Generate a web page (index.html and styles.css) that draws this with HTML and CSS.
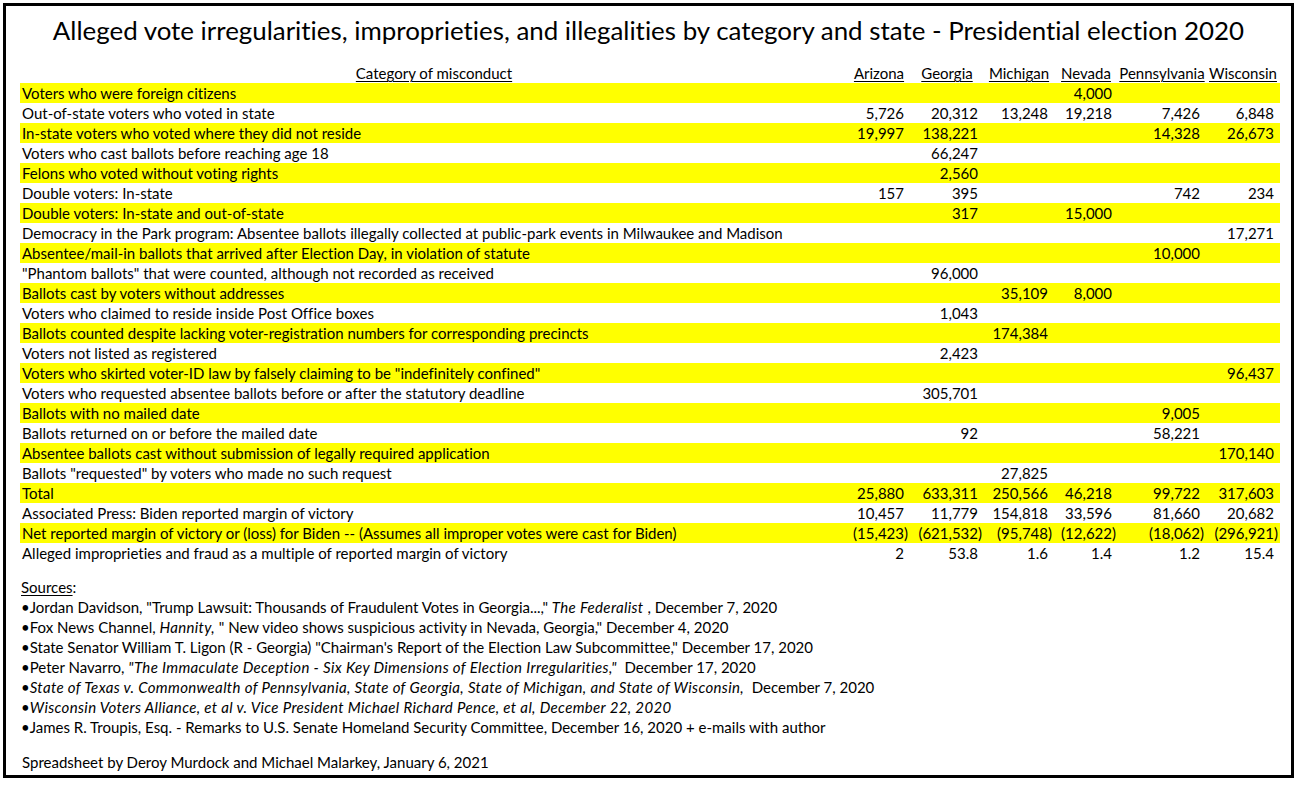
FILE: index.html
```html
<!DOCTYPE html>
<html lang="en">
<head>
<meta charset="utf-8">
<title>Alleged vote irregularities - Presidential election 2020</title>
<link rel="stylesheet" href="styles.css">
</head>
<body>
<div class="sheet">
  <h1 class="title">Alleged vote irregularities, improprieties, and illegalities by category and state - Presidential election 2020</h1>
  <table class="grid">
    <colgroup>
      <col class="c-cat"><col class="c-az"><col class="c-ga"><col class="c-mi"><col class="c-nv"><col class="c-pa"><col class="c-wi">
    </colgroup>
    <thead>
      <tr class="head">
        <th><u>Category of misconduct</u></th>
        <th><u>Arizona</u></th>
        <th><u>Georgia</u></th>
        <th><u>Michigan</u></th>
        <th><u>Nevada</u></th>
        <th><u>Pennsylvania</u></th>
        <th><u>Wisconsin</u></th>
      </tr>
    </thead>
    <tbody>
      <tr class="hl"><td>Voters who were foreign citizens</td><td></td><td></td><td></td><td>4,000</td><td></td><td></td></tr>
      <tr><td>Out-of-state voters who voted in state</td><td>5,726</td><td>20,312</td><td>13,248</td><td>19,218</td><td>7,426</td><td>6,848</td></tr>
      <tr class="hl"><td>In-state voters who voted where they did not reside</td><td>19,997</td><td>138,221</td><td></td><td></td><td>14,328</td><td>26,673</td></tr>
      <tr><td>Voters who cast ballots before reaching age 18</td><td></td><td>66,247</td><td></td><td></td><td></td><td></td></tr>
      <tr class="hl"><td>Felons who voted without voting rights</td><td></td><td>2,560</td><td></td><td></td><td></td><td></td></tr>
      <tr><td>Double voters: In-state</td><td>157</td><td>395</td><td></td><td></td><td>742</td><td>234</td></tr>
      <tr class="hl"><td>Double voters: In-state and out-of-state</td><td></td><td>317</td><td></td><td>15,000</td><td></td><td></td></tr>
      <tr><td>Democracy in the Park program: Absentee ballots illegally collected at public-park events in Milwaukee and Madison</td><td></td><td></td><td></td><td></td><td></td><td>17,271</td></tr>
      <tr class="hl"><td>Absentee/mail-in ballots that arrived after Election Day, in violation of statute</td><td></td><td></td><td></td><td></td><td>10,000</td><td></td></tr>
      <tr><td>"Phantom ballots" that were counted, although not recorded as received</td><td></td><td>96,000</td><td></td><td></td><td></td><td></td></tr>
      <tr class="hl"><td>Ballots cast by voters without addresses</td><td></td><td></td><td>35,109</td><td>8,000</td><td></td><td></td></tr>
      <tr><td>Voters who claimed to reside inside Post Office boxes</td><td></td><td>1,043</td><td></td><td></td><td></td><td></td></tr>
      <tr class="hl"><td>Ballots counted despite lacking voter-registration numbers for corresponding precincts</td><td></td><td></td><td>174,384</td><td></td><td></td><td></td></tr>
      <tr><td>Voters not listed as registered</td><td></td><td>2,423</td><td></td><td></td><td></td><td></td></tr>
      <tr class="hl"><td>Voters who skirted voter-ID law by falsely claiming to be "indefinitely confined"</td><td></td><td></td><td></td><td></td><td></td><td>96,437</td></tr>
      <tr><td>Voters who requested absentee ballots before or after the statutory deadline</td><td></td><td>305,701</td><td></td><td></td><td></td><td></td></tr>
      <tr class="hl"><td>Ballots with no mailed date</td><td></td><td></td><td></td><td></td><td>9,005</td><td></td></tr>
      <tr><td>Ballots returned on or before the mailed date</td><td></td><td>92</td><td></td><td></td><td>58,221</td><td></td></tr>
      <tr class="hl"><td>Absentee ballots cast without submission of legally required application</td><td></td><td></td><td></td><td></td><td></td><td>170,140</td></tr>
      <tr><td>Ballots "requested" by voters who made no such request</td><td></td><td></td><td>27,825</td><td></td><td></td><td></td></tr>
      <tr class="hl"><td>Total</td><td>25,880</td><td>633,311</td><td>250,566</td><td>46,218</td><td>99,722</td><td>317,603</td></tr>
      <tr><td>Associated Press: Biden reported margin of victory</td><td>10,457</td><td>11,779</td><td>154,818</td><td>33,596</td><td>81,660</td><td>20,682</td></tr>
      <tr class="hl neg"><td>Net reported margin of victory or (loss) for Biden -- (Assumes all improper votes were cast for Biden)</td><td>(15,423)</td><td>(621,532)</td><td>(95,748)</td><td>(12,622)</td><td>(18,062)</td><td>(296,921)</td></tr>
      <tr><td>Alleged improprieties and fraud as a multiple of reported margin of victory</td><td>2</td><td>53.8</td><td>1.6</td><td>1.4</td><td>1.2</td><td>15.4</td></tr>
    </tbody>
  </table>
  <div class="sources">
    <p class="line"><u>Sources</u>:</p>
    <p class="line">•Jordan Davidson, "Trump Lawsuit: Thousands of Fraudulent Votes in Georgia...," <i>The Federalist</i> , December 7, 2020</p>
    <p class="line">•Fox News Channel, <i>Hannity, </i>" New video shows suspicious activity in Nevada, Georgia," December 4, 2020</p>
    <p class="line">•State Senator William T. Ligon (R - Georgia) "Chairman's Report of the Election Law Subcommittee," December 17, 2020</p>
    <p class="line">•Peter Navarro, <i>"The Immaculate Deception - Six Key Dimensions of Election Irregularities,"</i>&nbsp; December 17, 2020</p>
    <p class="line">•<i>State of Texas v. Commonwealth of Pennsylvania, State of Georgia, State of Michigan, and State of Wisconsin,</i>&nbsp; December 7, 2020</p>
    <p class="line">•<i>Wisconsin Voters Alliance, et al v. Vice President Michael Richard Pence, et al, December 22, 2020</i></p>
    <p class="line">•James R. Troupis, Esq. - Remarks to U.S. Senate Homeland Security Committee, December 16, 2020 + e-mails with author</p>
  </div>
  <p class="credit">Spreadsheet by Deroy Murdock and Michael Malarkey, January 6, 2021</p>
</div>
</body>
</html>
```

FILE: styles.css
```css
html, body {
  margin: 0;
  padding: 0;
  background: #ffffff;
}

body {
  font-family: Lato, "Open Sans", "Liberation Sans", sans-serif;
  font-variant-ligatures: none;
  color: #000;
}

.sheet {
  box-sizing: border-box;
  width: 1291px;
  height: 775px;
  margin: 3px;
  border: 3px solid #000;
  padding: 0 0 0 14px;
}

.title {
  margin: 0 0 0 -14px;
  height: 57px;
  padding-top: 9px;
  box-sizing: border-box;
  text-align: center;
  font-weight: 400;
  font-size: 25.9px;
  line-height: 30px;
  white-space: nowrap;
}

.grid {
  width: 1260px;
  table-layout: fixed;
  border-collapse: collapse;
  font-size: 15px;
}

.c-cat { width: 828px; }
.c-az { width: 62px; }
.c-ga { width: 74px; }
.c-mi { width: 70px; }
.c-nv { width: 64px; }
.c-pa { width: 88px; }
.c-wi { width: 74px; }

.grid th,
.grid td {
  height: 20px;
  padding: 0;
  line-height: 20px;
  white-space: nowrap;
  overflow: visible;
}

.grid th {
  font-weight: 400;
  text-align: center;
}

.grid th u,
.sources u {
  text-decoration-thickness: 1px;
  text-underline-offset: 2px;
}

.grid td {
  text-align: right;
  padding-right: 6px;
}

.grid td:first-child {
  text-align: left;
  padding-left: 2px;
  padding-right: 0;
}

.grid tr.neg td {
  padding-right: 2px;
}

.grid tr.neg td:first-child {
  padding-right: 0;
}

.grid tr.hl td {
  background: #ffff00;
}

.sources {
  margin-top: 14px;
  font-size: 15px;
}

.sources i {
  letter-spacing: 0.35px;
}

.line {
  margin: 0;
  height: 20px;
  line-height: 20px;
  padding-left: 1px;
  white-space: nowrap;
}

.credit {
  margin: 15px 0 0;
  padding-left: 2px;
  font-size: 15px;
  line-height: 20px;
}
```
